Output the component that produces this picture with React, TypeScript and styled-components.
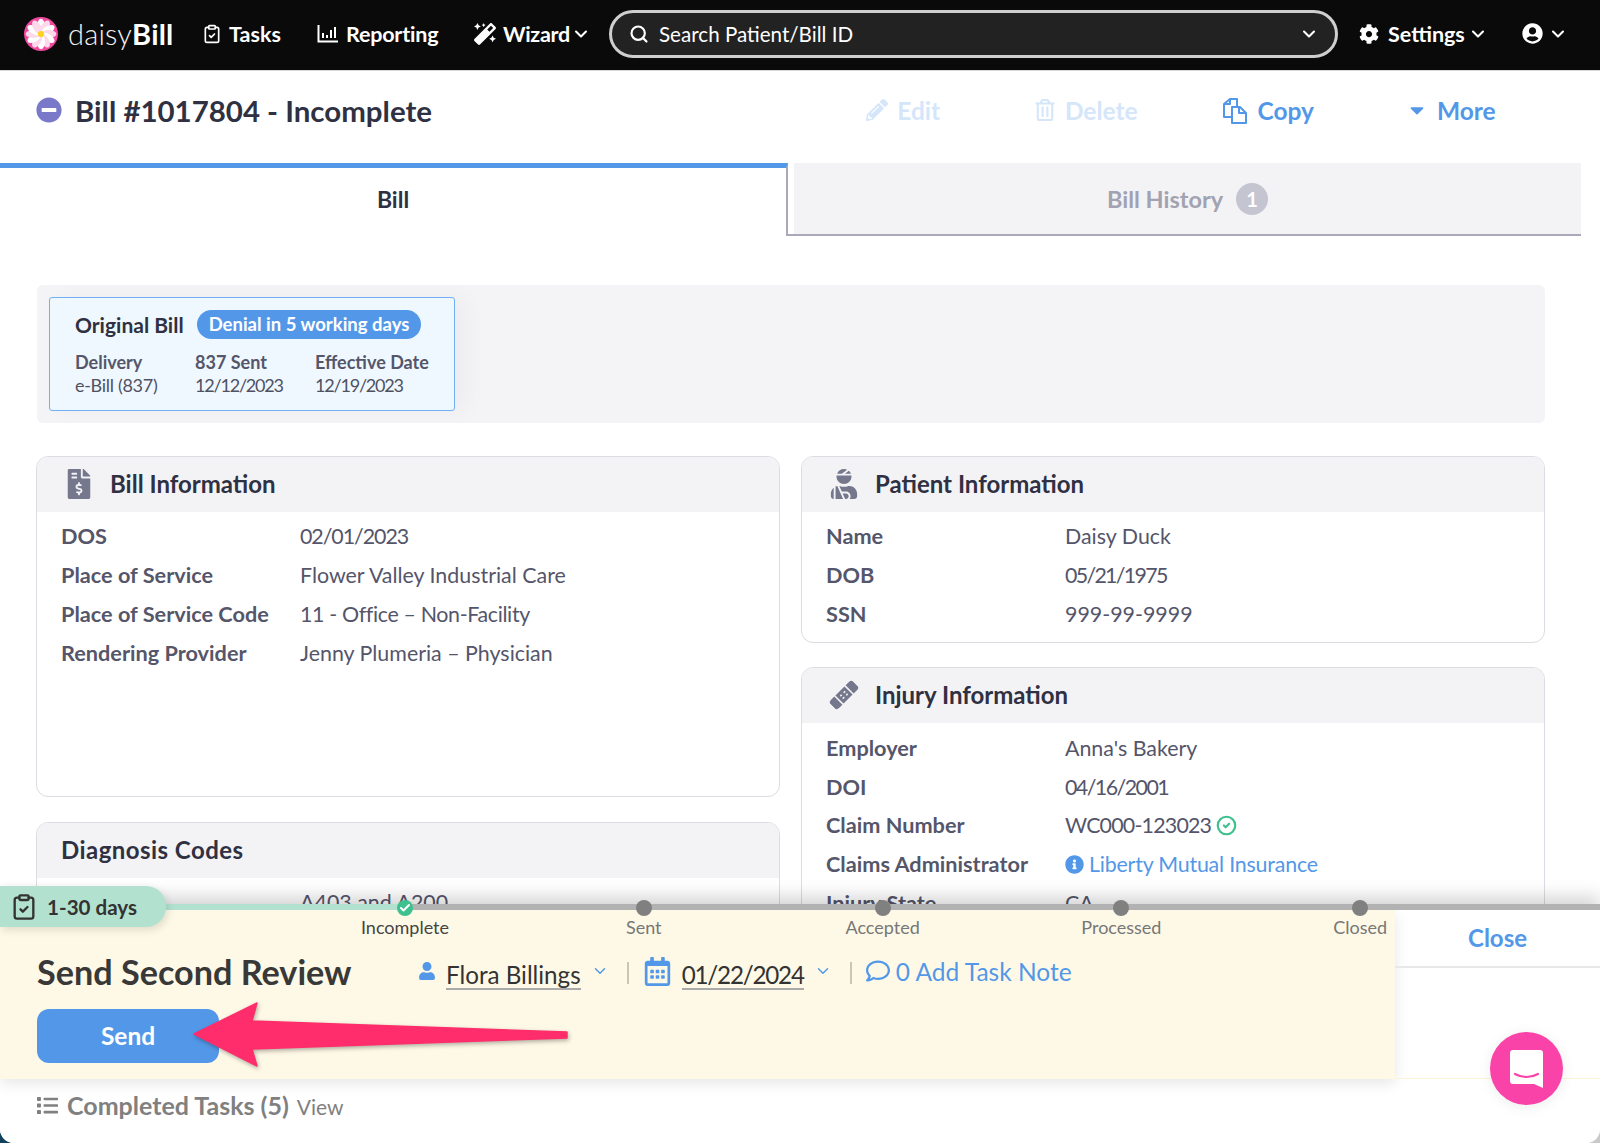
import * as React from 'react';
import styled, { createGlobalStyle } from 'styled-components';
import { ChevronDown, ClipboardCheck, Check, CircleCheck, Search } from 'lucide-react';
import {
    FaBandAid,
    FaCaretDown,
    FaCog,
    FaFileInvoiceDollar,
    FaInfoCircle,
    FaList,
    FaMagic,
    FaMinusCircle,
    FaPencilAlt,
    FaRegCalendarAlt,
    FaRegComment,
    FaRegTrashAlt,
    FaUser,
    FaUserCircle,
    FaUserInjured,
} from 'react-icons/fa';

const Global = createGlobalStyle`
    html, body {
        margin: 0;
        padding: 0;
        background: linear-gradient(90deg, #12405f 50%, #c9c9c9 50%);
    }
    * { box-sizing: border-box; }
`;

const FONT = 'Lato, "Open Sans", sans-serif';
const BLUE = '#5398e8';
const PALE = '#d5e6fa';

const Page = styled.div`
    position: relative;
    width: 1600px;
    height: 1143px;
    overflow: hidden;
    background: #fff;
    border-radius: 0 0 14px 14px;
    font-family: ${FONT};
    color: #4f5162;
`;

const Tight = styled.span<{ $by: number }>`
    letter-spacing: ${p => p.$by}px;
`;

/* top nav */
const Nav = styled.nav`
    display: flex;
    align-items: center;
    height: 71px;
    padding: 0 0 3px 24px;
    background: #0a0a0a;
    border-bottom: 1px solid #d8d8d8;
    color: #fff;
`;

const Logo = styled.div`
    display: flex;
    align-items: center;
    gap: 10px;
    width: 178px;
`;

const Wordmark = styled.span`
    font-size: 29px;
    font-weight: 300;
    letter-spacing: 0.2px;
    color: #f2f2f2;
    b { font-weight: 700; color: #fff; }
`;

const NavItem = styled.div<{ $width: number; $gap?: number }>`
    display: flex;
    align-items: center;
    gap: ${p => p.$gap ?? 7}px;
    width: ${p => p.$width}px;
    font-size: 21.5px;
    font-weight: 700;
    svg { flex: none; }
`;

const NavCaret = styled.span`
    display: flex;
    margin-left: -6px;
`;

const SearchBox = styled.div`
    display: flex;
    align-items: center;
    gap: 10px;
    width: 729px;
    height: 48px;
    margin-right: 21px;
    padding: 0 16px 0 17px;
    background: #222;
    border: 3px solid #cfcfcf;
    border-radius: 24px;
    font-size: 20.6px;
`;

const SearchText = styled.span`
    flex: 1;
`;

/* title + actions */
const TitleBar = styled.header`
    display: flex;
    align-items: center;
    justify-content: space-between;
    height: 92px;
    padding: 0 58px 14px 36px;
`;

const Title = styled.h1`
    display: flex;
    align-items: center;
    gap: 13px;
    margin: 0;
    font-size: 29.45px;
    font-weight: 700;
    color: #2f3142;
    svg { color: #7a78c9; }
`;

const Actions = styled.div`
    display: flex;
`;

const Action = styled.div<{ $off?: boolean }>`
    display: flex;
    align-items: center;
    justify-content: center;
    gap: 9px;
    width: 182.5px;
    font-size: 24.5px;
    font-weight: 700;
    color: ${p => (p.$off ? PALE : BLUE)};
`;

/* tabs */
const Tabs = styled.div`
    display: flex;
    height: 73px;
    padding-right: 19px;
`;

const ActiveTab = styled.div`
    display: flex;
    align-items: center;
    justify-content: center;
    width: 788px;
    padding-bottom: 6px;
    background: #fff;
    border-top: 5px solid ${BLUE};
    border-right: 2px solid #a9a9bb;
    font-size: 23px;
    font-weight: 700;
    color: #2f3142;
`;

const OtherTab = styled.div`
    flex: 1;
    display: flex;
    align-items: center;
    justify-content: center;
    gap: 13px;
    padding-left: 6px;
    background: #f3f3f6;
    background-clip: content-box;
    border-bottom: 2px solid #a9a9bb;
    font-size: 23.5px;
    font-weight: 700;
    color: #a2a2b0;
`;

const CountBadge = styled.span`
    display: flex;
    align-items: center;
    justify-content: center;
    width: 32px;
    height: 32px;
    border-radius: 50%;
    background: #c4c5d0;
    color: #fff;
    font-size: 20px;
`;

/* main content */
const Main = styled.main`
    padding: 49px 55px 0 36px;
`;

const Band = styled.section`
    height: 138px;
    margin: 0 0 33px 1px;
    padding: 12px;
    background: #f4f4f6;
    border-radius: 6px;
`;

const BillCard = styled.div`
    width: 406px;
    height: 114px;
    padding: 11px 0 0 25px;
    background: #f0f8ff;
    border: 1.5px solid #6fb0f2;
    border-radius: 3px;
    box-shadow: 12px 0 24px rgba(0, 0, 0, 0.03);
`;

const CardHead = styled.div`
    display: flex;
    align-items: center;
    gap: 13px;
    height: 30px;
    font-size: 21px;
    font-weight: 700;
    color: #2f3142;
`;

const Pill = styled.span`
    padding: 0 12px;
    height: 29px;
    line-height: 28px;
    border-radius: 15px;
    background: ${BLUE};
    color: #fff;
    font-size: 18.5px;
`;

const CardCols = styled.div`
    display: grid;
    grid-template-columns: 120px 120px 1fr;
    margin-top: 12px;
    font-size: 18px;
    line-height: 23px;
    b { display: block; font-weight: 700; color: #55566a; }
`;

const Columns = styled.div`
    display: grid;
    grid-template-columns: 744px 744px;
    gap: 21px;
`;

const Stack = styled.div<{ $gap: number }>`
    display: flex;
    flex-direction: column;
    gap: ${p => p.$gap}px;
`;

const Panel = styled.section<{ $height?: number }>`
    min-height: ${p => p.$height ?? 0}px;
    padding-bottom: 8px;
    border: 1.5px solid #dcdce2;
    border-radius: 12px;
    overflow: hidden;
`;

const PanelHead = styled.h2`
    display: flex;
    align-items: center;
    height: 55px;
    margin: 0 0 6px;
    padding: 0 0 2px 24px;
    background: #f3f3f6;
    font-size: 24px;
    font-weight: 700;
    color: #2f3142;
`;

const HeadIcon = styled.span<{ $tilt?: boolean }>`
    display: flex;
    justify-content: center;
    width: 36px;
    margin-right: 13px;
    color: #75778c;
    transform: ${p => (p.$tilt ? 'rotate(-45deg) scaleY(0.72)' : 'none')};
`;

const Row = styled.div`
    display: grid;
    grid-template-columns: 239px 1fr;
    align-items: center;
    height: 38.8px;
    padding: 0 0 2px 24px;
    font-size: 21.4px;
`;

const Label = styled.span`
    font-size: 21.7px;
    font-weight: 700;
    color: #55566a;
`;

const Value = styled.span<{ $link?: boolean }>`
    display: flex;
    align-items: center;
    gap: 5px;
    color: ${p => (p.$link ? BLUE : '#54556a')};
`;

/* sticky footer drawer */
const Drawer = styled.div`
    position: absolute;
    left: 0;
    right: 0;
    top: 904px;
    bottom: 0;
    display: flex;
    flex-direction: column;
    background: #fff;
    box-shadow: 0 -8px 16px rgba(0, 0, 0, 0.16);
`;

const Track = styled.div`
    position: relative;
    flex: none;
    height: 6px;
    background: #b2b2b2;
`;

const Progress = styled.div`
    position: absolute;
    left: 0;
    top: 0;
    width: 405px;
    height: 100%;
    background: #b2e2cf;
`;

const Rail = styled.div`
    position: absolute;
    left: 285.6px;
    top: -4px;
    z-index: 2;
    display: flex;
`;

const Step = styled.div<{ $done?: boolean }>`
    display: flex;
    flex-direction: column;
    align-items: center;
    gap: 1px;
    width: 238.8px;
    font-size: 18px;
    line-height: 20px;
    color: ${p => (p.$done ? '#444' : '#777')};
`;

const Dot = styled.span<{ $done?: boolean }>`
    display: flex;
    align-items: center;
    justify-content: center;
    width: 16px;
    height: 16px;
    border-radius: 50%;
    background: ${p => (p.$done ? '#3fc08f' : '#808080')};
    color: #fff;
`;

const AgeBadge = styled.div`
    position: absolute;
    left: 0;
    top: -18px;
    z-index: 3;
    display: flex;
    align-items: center;
    gap: 9px;
    width: 166px;
    height: 41px;
    padding-left: 10px;
    border-radius: 0 20px 20px 0;
    background: #b2e2cf;
    box-shadow: 2px 3px 8px rgba(0, 0, 0, 0.12);
    font-size: 20.6px;
    font-weight: 700;
    color: #333;
`;

const DrawerBody = styled.div`
    display: flex;
    flex: none;
    height: 169px;
`;

const TaskPanel = styled.div`
    width: 1395px;
    padding: 42px 0 0 37px;
    background: #fef9e6;
    box-shadow: 0 4px 14px rgba(0, 0, 0, 0.1);
`;

const TaskRow = styled.div`
    display: flex;
    align-items: center;
    height: 38px;
    margin-bottom: 19px;
`;

const TaskTitle = styled.h3`
    width: 381px;
    margin: 0;
    font-size: 34.2px;
    font-weight: 700;
    color: #383838;
`;

const Picker = styled.span`
    display: flex;
    align-items: center;
    gap: 10px;
    color: ${BLUE};
`;

const PickerValue = styled.span`
    margin-top: 9px;
    font-size: 24.2px;
    line-height: 26px;
    color: #333;
    border-bottom: 2px solid #aaa;
`;

const Divider = styled.span`
    width: 2px;
    height: 22px;
    margin: 4px 14px 0 18px;
    background: #c9c6b8;
`;

const NoteLink = styled.span`
    display: flex;
    align-items: center;
    gap: 6px;
    font-size: 24.5px;
    color: ${BLUE};
`;

const SendButton = styled.button`
    display: block;
    width: 182px;
    height: 54px;
    padding: 0 0 2px;
    border: 0;
    border-radius: 12px;
    background: ${BLUE};
    color: #fff;
    font-family: ${FONT};
    font-size: 24.5px;
    font-weight: 700;
`;

const ClosePanel = styled.div`
    flex: 1;
    border-bottom: 1px solid #fdf3d8;
`;

const CloseLink = styled.div`
    height: 58px;
    padding-top: 2px;
    text-align: center;
    line-height: 52px;
    border-bottom: 2px solid #e8e8e8;
    font-size: 24px;
    font-weight: 700;
    color: ${BLUE};
`;

const Completed = styled.div`
    display: flex;
    align-items: baseline;
    gap: 8px;
    padding: 11px 0 0 37px;
    font-size: 25px;
    font-weight: 700;
    color: #808080;
    svg { align-self: center; margin-right: 1px; }
    span { font-size: 21px; font-weight: 400; }
`;

const Arrow = styled.svg`
    position: absolute;
    left: 190px;
    top: 96px;
    z-index: 4;
    filter: drop-shadow(1px 2px 2px rgba(0, 0, 0, 0.3));
`;

const ChatBubble = styled.div`
    position: absolute;
    left: 1490px;
    top: 1032px;
    z-index: 5;
    display: flex;
    align-items: center;
    justify-content: center;
    width: 73px;
    height: 73px;
    border-radius: 50%;
    background: #f943a8;
    box-shadow: 0 2px 14px rgba(0, 0, 0, 0.08);
`;

const Flower: React.FC = () => (
    <svg width="34" height="34" viewBox="0 0 33 33">
        <circle cx="16.5" cy="16.5" r="16.5" fill="#f0479f" />
        {[0, 30, 60, 90, 120, 150, 180, 210, 240, 270, 300, 330].map(a => (
            <ellipse key={a} cx="16.5" cy="9" rx="3.8" ry="7.4" fill={a % 60 ? '#fcd9ea' : '#fff'} transform={`rotate(${a} 16.5 16.5)`} />
        ))}
        <circle cx="16.5" cy="16.5" r="3" fill="#ffd21f" />
    </svg>
);

const ChartIcon: React.FC = () => (
    <svg width="22" height="20" viewBox="0 0 22 20" fill="none" stroke="#fff" strokeWidth="2">
        <path d="M1.5 1v16.5H21" />
        <path d="M6 9v5M10 11v3M14 6v8M18 3v11" />
    </svg>
);

const CopyIcon: React.FC = () => (
    <svg width="26" height="27" viewBox="0 0 26 27" fill="none" stroke={BLUE} strokeWidth="2" strokeLinejoin="round">
        <path d="M9 20H2V7l6-5h7v7" />
        <path d="M8 2v5H2" />
        <path d="M10 10h8l6 6v10H10z" fill="#fff" />
        <path d="M17 10v6h7" />
    </svg>
);

const Chevron: React.FC<{ size?: number; width?: number }> = ({ size = 20, width = 2.5 }) => (
    <ChevronDown size={size} strokeWidth={width} />
);

type Info = [string, React.ReactNode];

const billRows: Info[] = [
    ['DOS', <Tight $by={-1.05}>02/01/2023</Tight>],
    ['Place of Service', 'Flower Valley Industrial Care'],
    ['Place of Service Code', <Tight $by={-0.35}>11 - Office – Non-Facility</Tight>],
    ['Rendering Provider', 'Jenny Plumeria – Physician'],
];

const patientRows: Info[] = [
    ['Name', 'Daisy Duck'],
    ['DOB', <Tight $by={-1.7}>05/21/1975</Tight>],
    ['SSN', '999-99-9999'],
];

const injuryRows: Info[] = [
    ['Employer', "Anna's Bakery"],
    ['DOI', <Tight $by={-1.55}>04/16/2001</Tight>],
    ['Claim Number', <><Tight $by={-0.8}>WC000-123023</Tight> <CircleCheck size={21} strokeWidth={2.5} color="#3fc08f" /></>],
    ['Claims Administrator', <><FaInfoCircle size={19} /><Tight $by={-0.2}>Liberty Mutual Insurance</Tight></>],
    ['Injury State', 'CA'],
];

const steps = ['Incomplete', 'Sent', 'Accepted', 'Processed', 'Closed'];

const Rows: React.FC<{ items: Info[] }> = ({ items }) => (
    <>
        {items.map(([label, value]) => (
            <Row key={label}>
                <Label>{label}</Label>
                <Value $link={label === 'Claims Administrator'}>{value}</Value>
            </Row>
        ))}
    </>
);

export default function App() {
    return (
        <Page>
            <Global />
            <Nav>
                <Logo>
                    <Flower />
                    <Wordmark>daisy<b>Bill</b></Wordmark>
                </Logo>
                <NavItem $width={115}><ClipboardCheck size={20} />Tasks</NavItem>
                <NavItem $width={157}><ChartIcon /><Tight $by={-0.2}>Reporting</Tight></NavItem>
                <NavItem $width={135}>
                    <FaMagic size={22} /><Tight $by={-0.3}>Wizard</Tight><NavCaret><Chevron /></NavCaret>
                </NavItem>
                <SearchBox>
                    <Search size={20} strokeWidth={2.6} />
                    <SearchText>Search Patient/Bill ID</SearchText>
                    <Chevron />
                </SearchBox>
                <NavItem $width={163} $gap={9}><FaCog size={20} />Settings<NavCaret><Chevron /></NavCaret></NavItem>
                <NavItem $width={60} $gap={5}><FaUserCircle size={21} /><Chevron /></NavItem>
            </Nav>

            <TitleBar>
                <Title><FaMinusCircle size={26} />Bill #1017804 - Incomplete</Title>
                <Actions>
                    <Action $off><FaPencilAlt size={22} />Edit</Action>
                    <Action $off><FaRegTrashAlt size={22} />Delete</Action>
                    <Action><CopyIcon />Copy</Action>
                    <Action><FaCaretDown size={22} />More</Action>
                </Actions>
            </TitleBar>

            <Tabs>
                <ActiveTab>Bill</ActiveTab>
                <OtherTab>Bill History <CountBadge>1</CountBadge></OtherTab>
            </Tabs>

            <Main>
                <Band>
                    <BillCard>
                        <CardHead>Original Bill <Pill>Denial in 5 working days</Pill></CardHead>
                        <CardCols>
                            <div><b>Delivery</b><Tight $by={-0.3}>e-Bill (837)</Tight></div>
                            <div><b>837 Sent</b><Tight $by={-1.2}>12/12/2023</Tight></div>
                            <div><b>Effective Date</b><Tight $by={-1.2}>12/19/2023</Tight></div>
                        </CardCols>
                    </BillCard>
                </Band>
                <Columns>
                    <Stack $gap={25}>
                        <Panel $height={341}>
                            <PanelHead><HeadIcon><FaFileInvoiceDollar size={30} /></HeadIcon>Bill Information</PanelHead>
                            <Rows items={billRows} />
                        </Panel>
                        <Panel>
                            <PanelHead><Tight $by={0.45}>Diagnosis Codes</Tight></PanelHead>
                            <Rows items={[['', 'A403 and A200']]} />
                        </Panel>
                    </Stack>
                    <Stack $gap={24}>
                        <Panel>
                            <PanelHead><HeadIcon><FaUserInjured size={30} /></HeadIcon>Patient Information</PanelHead>
                            <Rows items={patientRows} />
                        </Panel>
                        <Panel>
                            <PanelHead><HeadIcon $tilt><FaBandAid size={32} /></HeadIcon>Injury Information</PanelHead>
                            <Rows items={injuryRows} />
                        </Panel>
                    </Stack>
                </Columns>
            </Main>

            <Drawer>
                <AgeBadge><ClipboardCheck size={28} strokeWidth={2} />1-30 days</AgeBadge>
                <Track>
                    <Progress />
                    <Rail>
                        {steps.map((s, i) => (
                            <Step key={s} $done={i === 0}>
                                <Dot $done={i === 0}>{i === 0 && <Check size={12} strokeWidth={4} />}</Dot>
                                {s}
                            </Step>
                        ))}
                    </Rail>
                </Track>
                <DrawerBody>
                    <TaskPanel>
                        <TaskRow>
                            <TaskTitle>Send Second Review</TaskTitle>
                            <Picker>
                                <FaUser size={18} />
                                <PickerValue>Flora Billings</PickerValue>
                                <Chevron size={18} width={2} />
                            </Picker>
                            <Divider />
                            <Picker>
                                <FaRegCalendarAlt size={29} />
                                <PickerValue><Tight $by={-1.2}>01/22/2024</Tight></PickerValue>
                                <Chevron size={18} width={2} />
                            </Picker>
                            <Divider />
                            <NoteLink><FaRegComment size={24} />0 Add Task Note</NoteLink>
                        </TaskRow>
                        <SendButton>Send</SendButton>
                    </TaskPanel>
                    <ClosePanel>
                        <CloseLink>Close</CloseLink>
                    </ClosePanel>
                </DrawerBody>
                <Completed>
                    <FaList size={21} />Completed Tasks (5) <span>View</span>
                </Completed>
                <Arrow width="385" height="70" viewBox="0 0 385 70">
                    <polygon points="4,34 67,3 62,21 377,32 377,38 62,49 67,66" fill="#ff2d6b" stroke="#ff2d6b" strokeWidth="1.5" strokeLinejoin="round" />
                </Arrow>
            </Drawer>

            <ChatBubble>
                <svg width="33" height="38" viewBox="0 0 33 38">
                    <path d="M3 0h27a3 3 0 0 1 3 3v35l-9-4H3a3 3 0 0 1-3-3V3a3 3 0 0 1 3-3z" fill="#fff" />
                    <path d="M5 24c7 4 16 4 23 0" fill="none" stroke="#f943a8" strokeWidth="2.2" strokeLinecap="round" />
                </svg>
            </ChatBubble>
        </Page>
    );
}
